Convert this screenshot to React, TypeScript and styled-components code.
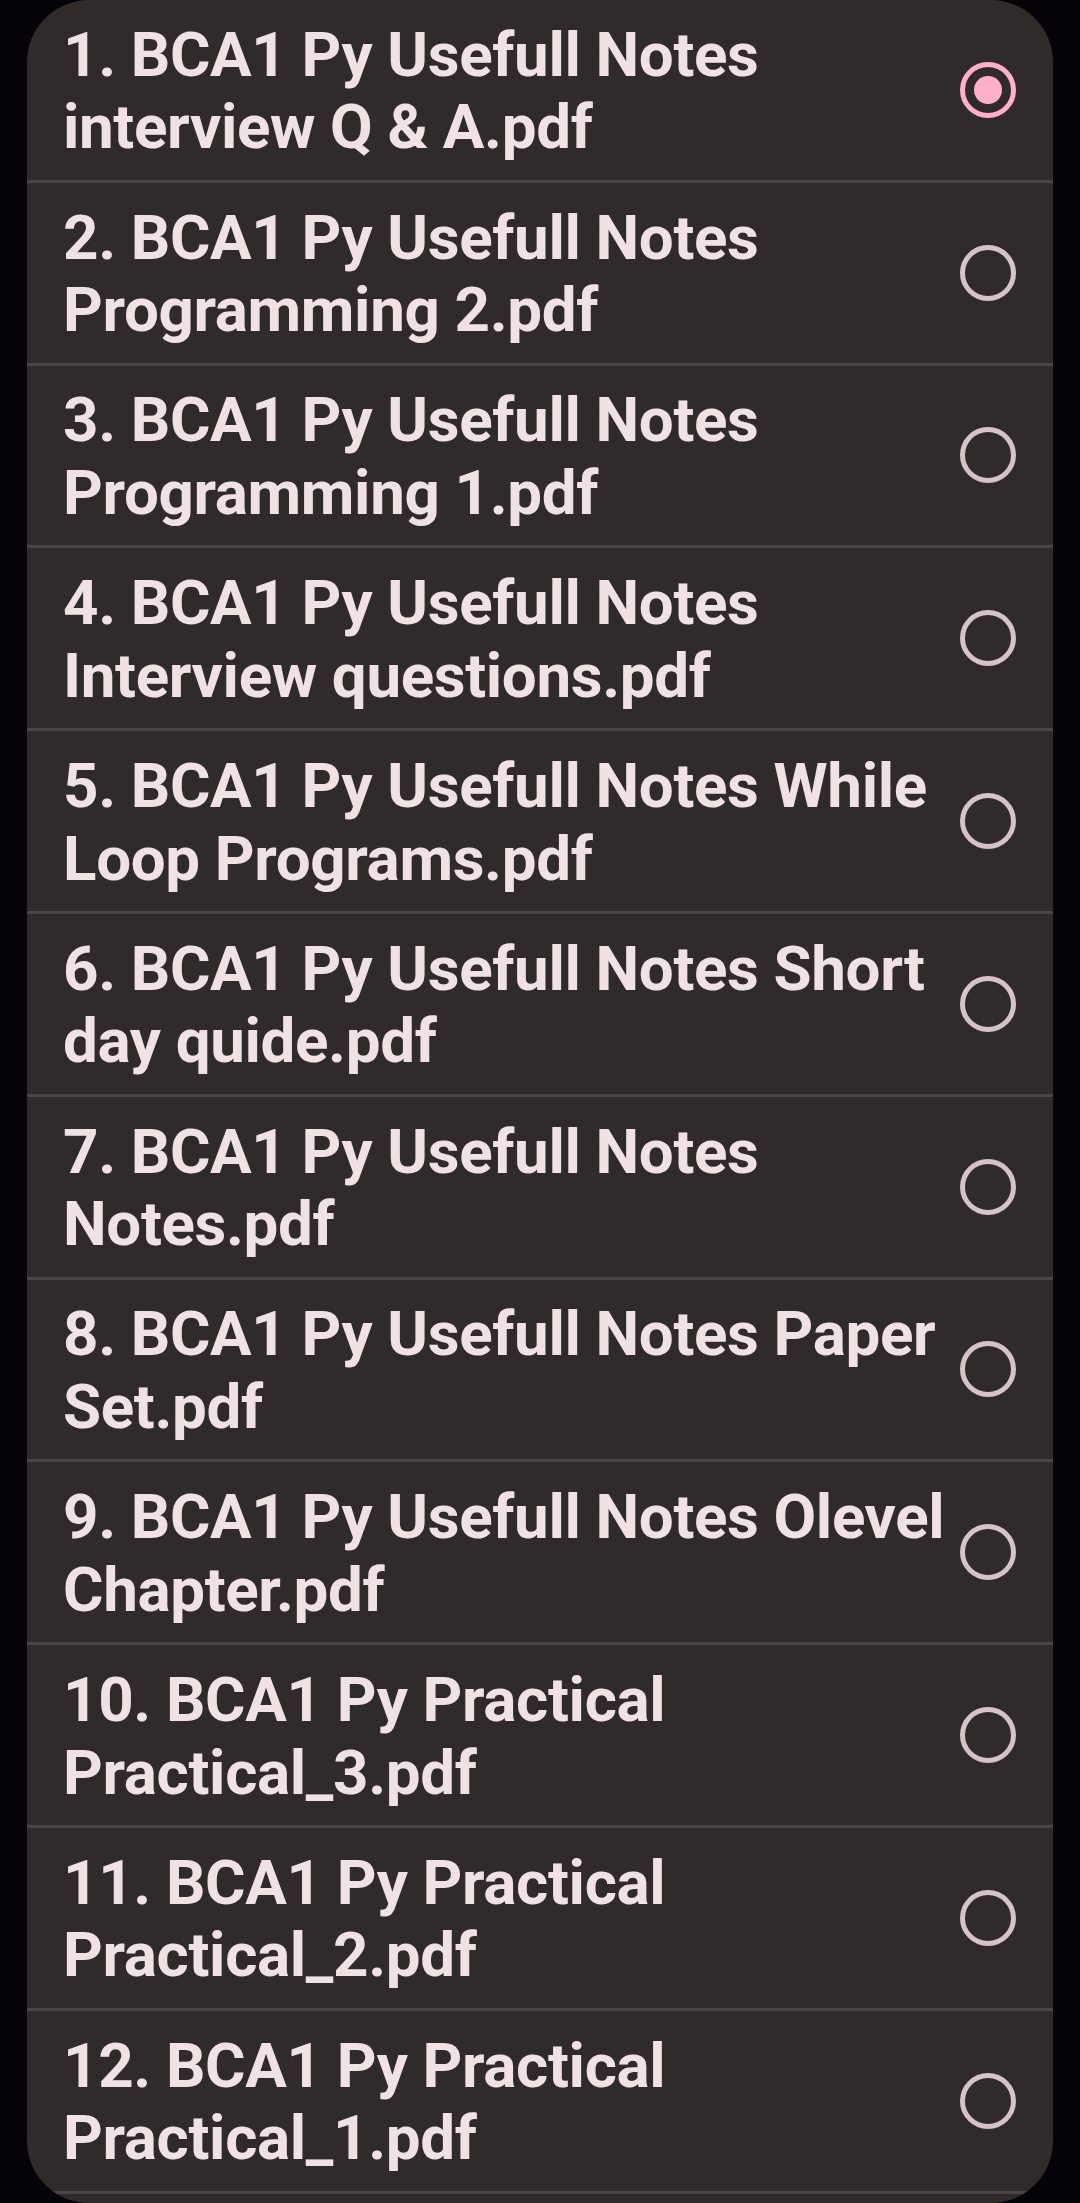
import React, { useState } from "react"
import styled, { createGlobalStyle } from "styled-components"

const files = [
    "1. BCA1 Py Usefull Notes interview Q & A.pdf",
    "2. BCA1 Py Usefull Notes Programming 2.pdf",
    "3. BCA1 Py Usefull Notes Programming 1.pdf",
    "4. BCA1 Py Usefull Notes Interview questions.pdf",
    "5. BCA1 Py Usefull Notes While Loop Programs.pdf",
    "6. BCA1 Py Usefull Notes Short day quide.pdf",
    "7. BCA1 Py Usefull Notes Notes.pdf",
    "8. BCA1 Py Usefull Notes Paper Set.pdf",
    "9. BCA1 Py Usefull Notes Olevel Chapter.pdf",
    "10. BCA1 Py Practical Practical_3.pdf",
    "11. BCA1 Py Practical Practical_2.pdf",
    "12. BCA1 Py Practical Practical_1.pdf",
]

const colors = {
    page: "#050307",
    surface: "#312a2b",
    divider: "#4b4345",
    text: "#f0e1e3",
    ring: "#d6c3c6",
    primary: "#ffb0c8",
}

const GlobalStyle = createGlobalStyle`
    html, body {
        margin: 0;
        padding: 0;
        background: ${colors.page};
    }
    body {
        font-family: Roboto, "Noto Sans", "Liberation Sans", sans-serif;
        -webkit-font-smoothing: antialiased;
    }
`

const App = () => {
    const [selected, setSelected] = useState(0)

    return (
        <>
            <GlobalStyle />
            <Screen>
                <Panel>
                    {files.map((name, i) => (
                        <Row key={name} onClick={() => setSelected(i)}>
                            <Label>{name}</Label>
                            <Radio data-checked={selected === i} />
                        </Row>
                    ))}
                </Panel>
            </Screen>
        </>
    )
}

const Screen = styled.div`
    height: 2203px;
    overflow: hidden;
    padding: 0 27.3px 0 27px;
    box-sizing: border-box;
`

const Panel = styled.div`
    background: ${colors.surface};
    border-radius: 62px;
    overflow: hidden;
    height: 2203px;
    display: flex;
    flex-direction: column;
`

const Row = styled.div`
    flex: none;
    height: 182.8px;
    box-sizing: border-box;
    display: flex;
    align-items: center;
    padding: 0 37px 0 36px;
    border-bottom: 3px solid ${colors.divider};
    cursor: pointer;
`

const Label = styled.div`
    flex: 1;
    min-width: 0;
    font-size: 61.9px;
    line-height: 72.5px;
    font-weight: 700;
    letter-spacing: -0.35px;
    color: ${colors.text};
    padding-top: 3px;
`

const Radio = styled.div`
    flex: none;
    width: 56px;
    height: 56px;
    box-sizing: border-box;
    border-radius: 50%;
    border: 5.6px solid ${colors.ring};
    display: flex;
    align-items: center;
    justify-content: center;

    &[data-checked=true] {
        border-color: ${colors.primary};
    }
    &[data-checked=true]::after {
        content: "";
        width: 28px;
        height: 28px;
        border-radius: 50%;
        background: ${colors.primary};
    }
`

export default App
